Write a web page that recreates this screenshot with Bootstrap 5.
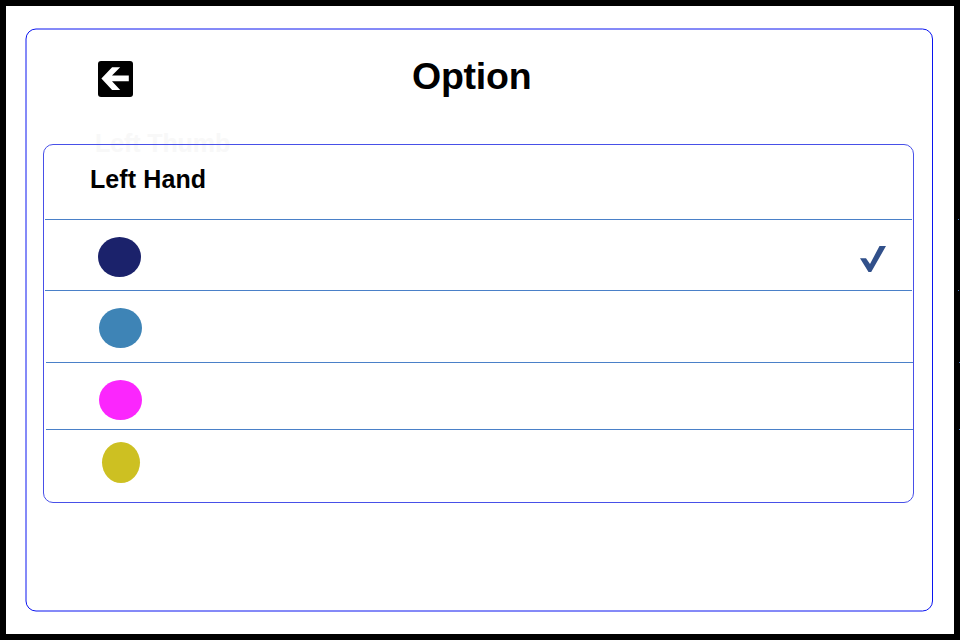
<!DOCTYPE html>
<html lang="en">
<head>
<meta charset="utf-8">
<meta name="viewport" content="width=device-width, initial-scale=1">
<title>Option</title>
<link href="https://cdn.jsdelivr.net/npm/bootstrap@5.3.0/dist/css/bootstrap.min.css" rel="stylesheet">
<style>
body{font-family:"Liberation Sans",Arial,sans-serif;color:#000;line-height:1}
.screen{width:960px;height:640px;border:6px solid #000;padding:22px 21px 22px 19px}
.outline{left:0;top:0;width:908px;height:584px}
.head{height:116px;padding:33px 0 0 73px}
.back{width:35px;height:36px}
.title{font-size:37.5px;margin:-3px 0 0 279px;letter-spacing:-.25px}
.ghost{left:70px;top:103px;font-size:25px;letter-spacing:-.1px;color:#f8f8f8;white-space:nowrap}
.options{width:871px;height:359px;margin-left:18px;border:1px solid #4850e8;border-radius:10px}
.heading{height:74px;padding:22px 0 0 46px;font-size:25px;letter-spacing:.1px}
.line{height:1px;background:#4a80c8;margin:0 1px}
.line-b{margin:0 0 0 2px}
.dot{width:43px;height:40px;border-radius:50%}
.r1{height:70px;padding:17px 27px 0 54px}
.r2{height:71px;padding:17px 0 0 55px}
.r3{height:66px;padding:17px 0 0 55px}
.r4{height:73px;padding:12px 0 0 58px}
.navy{background:#1b226b}
.steel{background:#3e84b6}
.pink{background:#fb26fd}
.gold{background:#cdc022;width:38px;height:41px}
.tick{margin-top:9px}
.speck{width:1px;height:1px;background:#4a80c8;left:958px}
.speck-b{left:959px}
.y1{top:219px}.y2{top:290px}.y3{top:362px}.y4{top:429px}
</style>
</head>
<body class="m-0 overflow-hidden bg-white">
<main class="screen">
  <section class="h-100 position-relative">
    <svg class="outline position-absolute" viewBox="0 0 908 584"><rect x="1" y="1" width="906.5" height="582" rx="10" fill="none" stroke="#0a14f0"/></svg>
    <header class="head d-flex align-items-start position-relative">
      <a href="#" class="d-block back" aria-label="Back">
        <svg class="d-block" width="35" height="36" viewBox="0 0 35 36"><rect width="35" height="36" rx="3"/><path fill="#fff" d="M3.4 17.5 14.1 6.2h8.1L14 14.4H30.8v5.9H14l8.2 8.6h-8.1z"/></svg>
      </a>
      <h1 class="title fw-bold lh-1">Option</h1>
      <div class="ghost fw-bold position-absolute">Left Thumb</div>
    </header>
    <div class="options position-relative">
      <div class="heading fw-bold">Left Hand</div>
      <div class="line"></div>
      <div class="r1 d-flex justify-content-between">
        <div class="dot navy"></div>
        <svg class="tick d-block" width="26" height="26" viewBox="0 0 26 26"><path fill="#31508a" d="M0 12.2h6L10 18 19.5 0H26L11.2 26H8.5z"/></svg>
      </div>
      <div class="line"></div>
      <div class="r2"><div class="dot steel"></div></div>
      <div class="line line-b"></div>
      <div class="r3"><div class="dot pink"></div></div>
      <div class="line line-b"></div>
      <div class="r4"><div class="dot gold"></div></div>
    </div>
  </section>
</main>
<!-- stray divider ends on the device edge -->
<i class="speck y1 position-absolute"></i>
<i class="speck y2 position-absolute"></i>
<i class="speck speck-b y3 position-absolute"></i>
<i class="speck speck-b y4 position-absolute"></i>
<script src="https://cdn.jsdelivr.net/npm/bootstrap@5.3.0/dist/js/bootstrap.bundle.min.js"></script>
</body>
</html>
